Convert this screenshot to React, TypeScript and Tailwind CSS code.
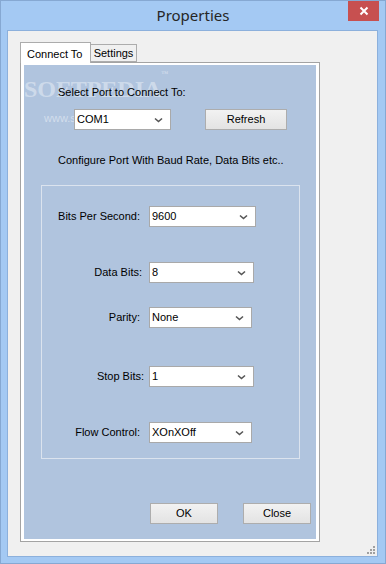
import React from 'react';

const uiFont = { fontFamily: '"Liberation Sans", Arial, sans-serif' };

const Chevron = () => (
    <svg width="9" height="6" viewBox="0 0 9 6" className="shrink-0">
        <path d="M1 1.5 L4.5 4.5 L8 1.5" fill="none" stroke="#555" strokeWidth="1.6" />
    </svg>
);

interface ComboProps {
    value: string;
    width: string;
}

const Combo: React.FC<ComboProps> = ({ value, width }) => (
    <div className={`${width} h-[21px] bg-white border border-[#a9a9a9] flex items-center justify-between pl-[2px] pr-[7px] text-[11px] text-black`}>
        <span>{value}</span>
        <Chevron />
    </div>
);

const Button: React.FC<{ label: string; className?: string }> = ({ label, className }) => (
    <div className={`h-[21px] border border-[#adadad] bg-gradient-to-b from-[#f2f2f2] to-[#e3e3e3] flex items-center justify-center text-[11px] text-black ${className ?? ''}`}>
        {label}
    </div>
);

interface Row {
    label: string;
    value: string;
    labelW: string;
    comboW: string;
    gap: string;
    mt: string;
}

// port settings rows inside the group box
const rows: Row[] = [
    { label: 'Bits Per Second:', value: '9600', labelW: 'w-[98px]', comboW: 'w-[107px]', gap: 'ml-[9px]', mt: 'mt-[20px]' },
    { label: 'Data Bits:', value: '8', labelW: 'w-[100px]', comboW: 'w-[105px]', gap: 'ml-[7px]', mt: 'mt-[35px]' },
    { label: 'Parity:', value: 'None', labelW: 'w-[98px]', comboW: 'w-[103px]', gap: 'ml-[9px]', mt: 'mt-[24px]' },
    { label: 'Stop Bits:', value: '1', labelW: 'w-[102px]', comboW: 'w-[105px]', gap: 'ml-[5px]', mt: 'mt-[38px]' },
    { label: 'Flow Control:', value: 'XOnXOff', labelW: 'w-[98px]', comboW: 'w-[103px]', gap: 'ml-[9px]', mt: 'mt-[35px]' },
];

export default function App() {
    return (
        <div className="w-[386px] h-[564px] bg-[#a4c9f3] border border-[#86a8d2] flex flex-col relative overflow-hidden" style={uiFont}>
            {/* title bar */}
            <div className="h-[29px] flex items-center justify-center text-[15px] text-[#262626]" style={{ fontFamily: '"Noto Sans", "Open Sans", sans-serif' }}>
                Properties
            </div>
            <div className="absolute top-0 right-[6px] w-[31px] h-[20px] bg-[#c75050] flex items-center justify-center">
                <svg width="10" height="10" viewBox="0 0 10 10">
                    <path d="M1.5 1.5 L8.5 8.5 M8.5 1.5 L1.5 8.5" stroke="#fff" strokeWidth="2" />
                </svg>
            </div>

            {/* client area */}
            <div className="ml-[6px] w-[371px] h-[527px] bg-[#f0f0f0] border border-[#8cb0dc] pl-[12px] pt-[11px] relative">
                {/* tabs */}
                <div className="flex items-start h-[20px]">
                    <div className="w-[71px] h-[21px] bg-white border border-b-0 border-[#acacac] relative z-10 pl-[6px] pt-[3px] text-[11px] text-black">
                        Connect To
                    </div>
                    <div className="w-[46px] h-[18px] mt-[2px] bg-[#f0f0f0] border border-l-0 border-[#acacac] flex items-center justify-center text-[11px] text-black">
                        Settings
                    </div>
                </div>

                {/* tab page */}
                <div className="w-[300px] h-[480px] border border-[#a3a3a3] bg-white pt-[2px] pb-[2px] px-[3px]">
                    <div className="w-full h-full bg-[#b0c4de] flex flex-col relative">
                        {/* watermark */}
                        <div className="absolute left-0 top-[12px] text-[24px] font-bold text-white/40 pointer-events-none leading-none" style={{ fontFamily: '"Liberation Serif", serif' }}>
                            SOFTPEDIA<sup className="text-[7px] align-top">™</sup>
                        </div>
                        <div className="absolute left-[20px] top-[45px] text-[11px] text-white/45 pointer-events-none" style={{ fontFamily: '"Liberation Sans Narrow", "Liberation Sans", sans-serif' }}>
                            www.softpedia.com
                        </div>

                        <div className="relative ml-[34px] mt-[20px] text-[11px] text-black leading-[14px]">Select Port to Connect To:</div>
                        <div className="relative flex items-center mt-[10px]">
                            <div className="ml-[50px]"><Combo value="COM1" width="w-[97px]" /></div>
                            <Button label="Refresh" className="w-[82px] ml-[34px] h-[20px]" />
                        </div>
                        <div className="ml-[34px] mt-[23px] text-[11px] text-black leading-[14px]">Configure Port With Baud Rate, Data Bits etc..</div>

                        {/* group box */}
                        <div className="ml-[17px] mt-[18px] w-[259px] h-[274px] border border-[#dbe3ee] flex flex-col">
                            {rows.map(r => (
                                <div key={r.label} className={`flex items-center ${r.mt}`}>
                                    <div className={`${r.labelW} text-right text-[11px] text-black shrink-0`}>{r.label}</div>
                                    <div className={r.gap}>
                                        <Combo value={r.value} width={r.comboW} />
                                    </div>
                                </div>
                            ))}
                        </div>

                        <div className="flex mt-[44px] ml-[126px] gap-[25px]">
                            <Button label="OK" className="w-[68px]" />
                            <Button label="Close" className="w-[68px]" />
                        </div>
                    </div>
                </div>

                {/* resize grip */}
                <svg width="10" height="10" viewBox="0 0 10 10" className="absolute right-[1px] bottom-[1px]">
                    <rect x="7" y="1" width="2" height="2" fill="#a0a0a0" />
                    <rect x="4" y="4" width="2" height="2" fill="#a0a0a0" />
                    <rect x="7" y="4" width="2" height="2" fill="#a0a0a0" />
                    <rect x="1" y="7" width="2" height="2" fill="#a0a0a0" />
                    <rect x="4" y="7" width="2" height="2" fill="#a0a0a0" />
                    <rect x="7" y="7" width="2" height="2" fill="#a0a0a0" />
                </svg>
            </div>
        </div>
    );
}
